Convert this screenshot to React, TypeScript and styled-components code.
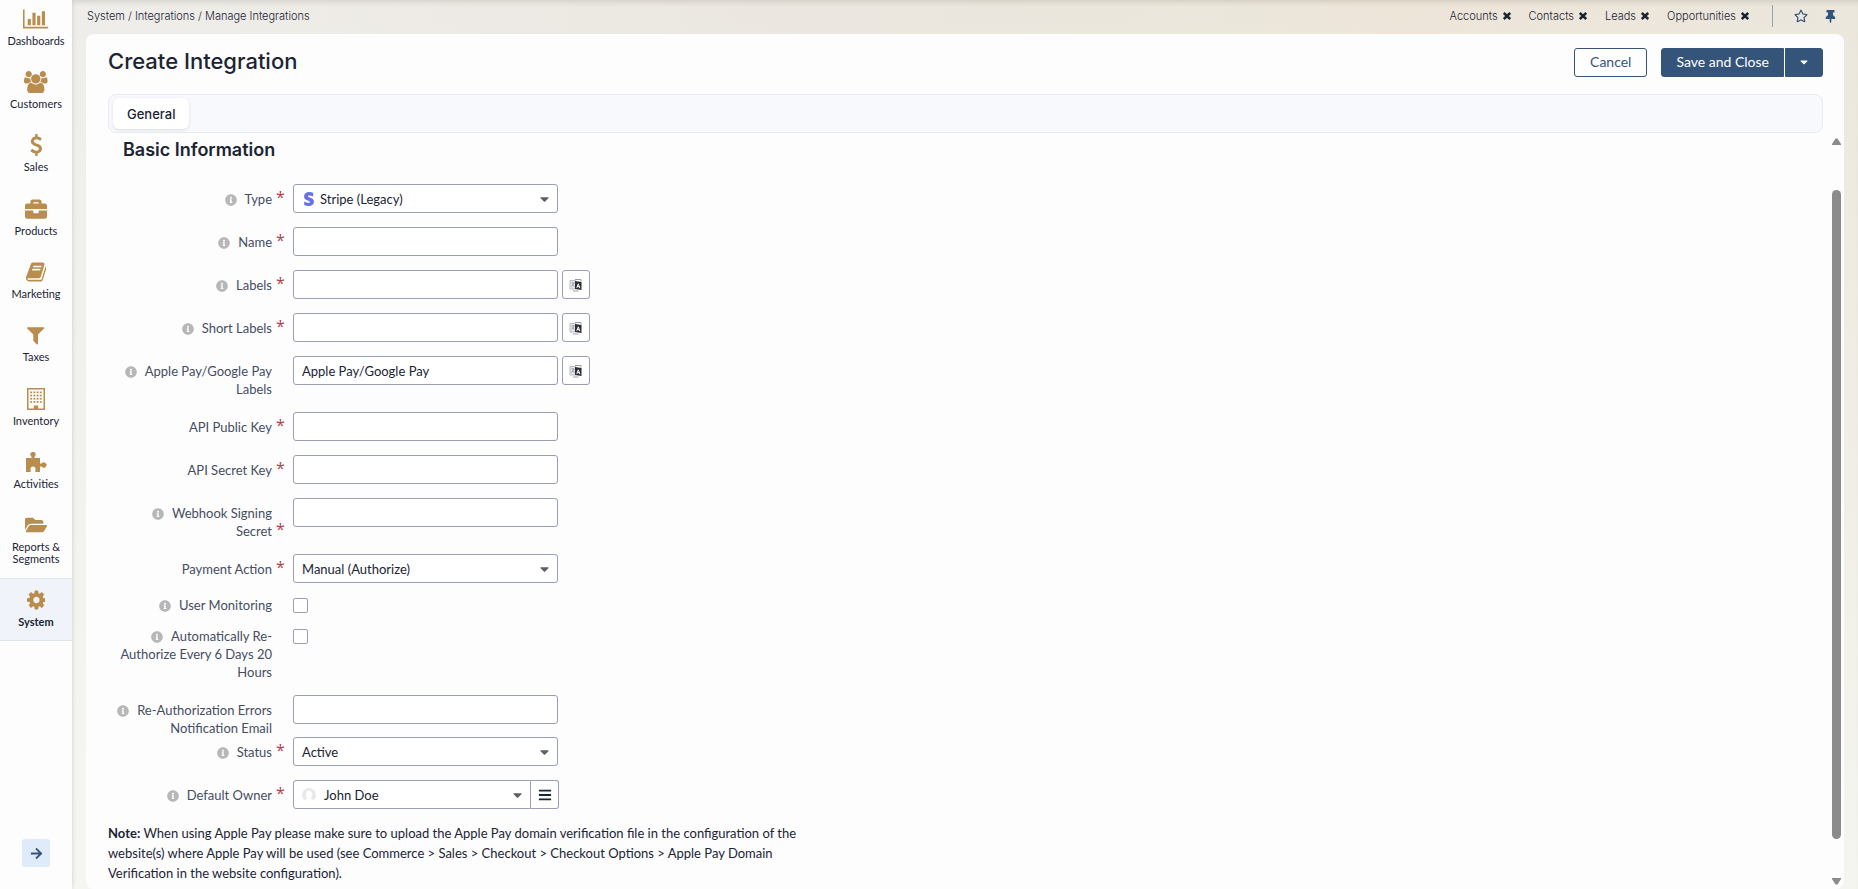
import React from "react";
import styled, { createGlobalStyle } from "styled-components";
import {
  FaArrowRight,
  FaBars,
  FaBriefcase,
  FaCaretDown,
  FaFolderOpen,
  FaInfoCircle,
  FaRegStar,
  FaStripeS,
  FaThumbtack,
} from "react-icons/fa";

const color = {
  text: "#1b2433",
  label: "#454d5e",
  gold: "#b98d4d",
  navy: "#34547a",
  line: "#9a9fb5",
  required: "#b1404a",
  surface: "#fdfdfe",
};

const bodyFont = `Lato, "Open Sans", sans-serif`;
const headFont = `Inter, Roboto, sans-serif`;

const GlobalStyle = createGlobalStyle`
  *, *::before, *::after { box-sizing: border-box; }
  body {
    margin: 0;
    font: 400 13px/18px ${bodyFont};
    color: ${color.text};
  }
  button, input, select { font: inherit; color: inherit; margin: 0; }
  a { color: inherit; text-decoration: none; }
  h1, h2, p, ul { margin: 0; padding: 0; }
`;

/* ---------- icons ---------- */

const Glyph = ({ w, d }: { w: number; d: string }) => (
  <svg viewBox={`0 0 ${w} 1792`} fill="currentColor" aria-hidden="true">
    <path d={d} />
  </svg>
);

const ChartIcon = () => (
  <Glyph
    w={2048}
    d="M640 896v512h-256v-512h256zM1024 384v1024h-256v-1024h256zM2048 1536v128h-2048v-1536h128v1408h1920zM1408 640v768h-256v-768h256zM1792 256v1152h-256v-1152h256z"
  />
);
const UsersIcon = () => (
  <Glyph
    w={1920}
    d="M593 896q-162 5-265 128h-134q-82 0-138-40.5t-56-118.5q0-353 124-353 6 0 43.5 21t97.5 42.5 119 21.5q67 0 133-23-5 37-5 66 0 139 81 256zM1664 1533q0 120-73 189.5t-194 69.5h-874q-121 0-194-69.5t-73-189.5q0-53 3.5-103.5t14-109 26.5-108.5 43-97.5 62-81 85.5-53.5 111.5-20q10 0 43 21.5t73 48 107 48 135 21.5 135-21.5 107-48 73-48 43-21.5q61 0 111.5 20t85.5 53.5 62 81 43 97.5 26.5 108.5 14 109 3.5 103.5zM640 256q0 106-75 181t-181 75-181-75-75-181 75-181 181-75 181 75 75 181zM1344 640q0 159-112.5 271.5t-271.5 112.5-271.5-112.5-112.5-271.5 112.5-271.5 271.5-112.5 271.5 112.5 112.5 271.5zM1920 865q0 78-56 118.5t-138 40.5h-134q-103-123-265-128 81-117 81-256 0-29-5-66 66 23 133 23 59 0 119-21.5t97.5-42.5 43.5-21q124 0 124 353zM1792 256q0 106-75 181t-181 75-181-75-75-181 75-181 181-75 181 75 75 181z"
  />
);
const DollarIcon = () => (
  <Glyph
    w={1024}
    d="M978 1185q0 153-99.5 263.5t-258.5 136.5v175q0 14-9 23t-23 9h-135q-13 0-22.5-9.5t-9.5-22.5v-175q-66-9-127.5-31t-101.5-44.5-74-48-46.5-37.5-17.5-18q-17-21-2-41l103-135q7-10 23-12 15-2 24 9l2 2q113 99 243 125 37 8 74 8 81 0 142.5-43t61.5-122q0-28-15-53t-33.5-42-58.5-37.5-66-32-80-32.5q-39-16-61.5-25t-61.5-26.5-62.5-31-56.5-35.5-53.5-42.5-43.5-49-35.5-58-21-66.5-8.5-78q0-138 98-242t255-134v-180q0-13 9.5-22.5t22.5-9.5h135q14 0 23 9t9 23v176q57 6 110.5 23t87 33.5 63.5 37.5 39 29 15 14q17 18 5 38l-81 146q-8 15-23 16-14 3-27-7-3-3-14.5-12t-39-26.5-58.5-32-74.5-26-85.5-11.5q-95 0-155 43t-60 111q0 26 8.5 48t29.5 41.5 39.5 33 56 31 60.5 27 70 27.5q53 20 81 31.5t76 35 75.5 42.5 62 50 53 63.5 31.5 76.5 13 94z"
  />
);
const BookIcon = () => (
  <Glyph
    w={1664}
    d="M1639 478q40 57 18 129l-275 906q-19 64-76.5 107.5t-122.5 43.5h-923q-77 0-148.5-53.5t-99.5-131.5q-24-67-2-127 0-4 3-27t4-37q1-8-3-21.5t-3-19.5q2-11 8-21t16.5-23.5 16.5-23.5q23-38 45-91.5t30-91.5q3-10 .5-30t-.5-28q3-11 17-28t17-23q21-36 42-92t25-90q1-9-2.5-32t.5-28q4-13 22-30.5t22-22.5q19-26 42.5-84.5t27.5-96.5q1-8-3-25.5t-2-26.5q2-8 9-18t18-23 17-21q8-12 16.5-30.5t15-35 16-36 19.5-32 26.5-23.5 36-11.5 47.5 5.5l-1 3q38-9 51-9h761q74 0 114 56t18 130l-274 906q-36 119-71.5 153.5t-128.5 34.5h-869q-27 0-38 15-11 16-1 43 24 70 144 70h923q29 0 56-15.5t35-41.5l300-987q7-22 5-57 38 15 59 43zM575 480q-4 13 2 22.5t20 9.5h608q13 0 25.5-9.5t16.5-22.5l21-64q4-13-2-22.5t-20-9.5h-608q-13 0-25.5 9.5t-16.5 22.5zM492 736q-4 13 2 22.5t20 9.5h608q13 0 25.5-9.5t16.5-22.5l21-64q4-13-2-22.5t-20-9.5h-608q-13 0-25.5 9.5t-16.5 22.5z"
  />
);
const FilterIcon = () => (
  <Glyph
    w={1408}
    d="M1403 295q17 41-14 70l-493 493v742q0 42-39 59-13 5-25 5-27 0-45-19l-256-256q-19-19-19-45v-486l-493-493q-31-29-14-70 17-39 59-39h1280q42 0 59 39z"
  />
);
const GearIcon = () => (
  <Glyph
    w={1536}
    d="M1024 896q0-106-75-181t-181-75-181 75-75 181 75 181 181 75 181-75 75-181zm512-109v222q0 12-8 23t-20 13l-185 28q-19 54-39 91 35 50 107 138 10 12 10 25t-9 23q-27 37-99 108t-94 71q-12 0-26-9l-138-108q-44 23-91 38-16 136-29 186-7 28-36 28h-222q-14 0-24.5-8.5t-11.5-21.5l-28-184q-49-16-90-37l-141 107q-10 9-25 9-14 0-25-11-126-114-165-168-7-10-7-23 0-12 8-23 15-21 51-66.5t54-70.5q-27-50-41-99l-183-27q-13-2-21-12.5t-8-23.5v-222q0-12 8-23t19-13l186-28q14-46 39-92-40-57-107-138-10-12-10-24 0-10 9-23 26-36 98.5-107.5t94.5-71.5q13 0 26 10l138 107q44-23 91-38 16-136 29-186 7-28 36-28h222q14 0 24.5 8.5t11.5 21.5l28 184q49 16 90 37l142-107q9-9 24-9 13 0 25 10 129 119 165 170 7 8 7 22 0 12-8 23-15 21-51 66.5t-54 70.5q26 50 41 98l183 28q13 2 21 12.5t8 23.5z"
  />
);
const BuildingIcon = () => (
  <svg viewBox="0 0 18 22" fill="currentColor" aria-hidden="true">
    <path fillRule="evenodd" d="M0 0h18v22H0zM1.5 1.5v19h5.300v-3h4.400v3h5.300v-19z" />
    {[3.5, 6.7, 9.9, 13.1].map((y) =>
      [3.2, 6.4, 9.6, 12.800].map((x) => (
        <rect key={`${x}-${y}`} x={x} y={y} width="1.900" height="1.700" />
      ))
    )}
  </svg>
);
const PuzzleIcon = () => (
  <svg viewBox="0 0 22 20" fill="currentColor" aria-hidden="true">
    <path d="M1 6h5.600V4.900a2.700 2.700 0 1 1 2.800 0V6H15v5.600h1.600a2.600 2.600 0 1 1 0 2.800H15V20h-4.700v-1.800a2.600 2.600 0 1 0-4.600 0V20H1z" />
  </svg>
);
const CloseIcon = () => (
  <svg viewBox="0 0 8 8" fill="none" stroke="currentColor" strokeWidth="2.400" aria-hidden="true">
    <path d="M.8 1 7.200 7M7.200 1 .8 7" />
  </svg>
);
const TranslateIcon = () => (
  <svg viewBox="0 0 14 14" fill="none" aria-hidden="true">
    <path d="M1 2.500h5.500v8.500H1z" fill="#e4e5e8" stroke="#b9bcc3" />
    <path d="M2.500 5h3M4 4v1M5 5.500 2.500 8.500M3 6.500l2.500 2" stroke="#8d9098" strokeWidth=".8" />
    <path d="M6 1.500h6v2M4 13h5.500" stroke="#9b9ea6" />
    <path d="M6 3l6.500 1v8L6 11z" fill="#2b2d33" />
    <path d="m7.800 9.800 1.500-4 1.600 4.400M8.300 8.600h2" stroke="#fff" />
  </svg>
);
const Avatar = () => (
  <svg viewBox="0 0 14 14" aria-hidden="true">
    <circle cx="7" cy="7" r="7" fill="#e9e9ec" />
    <ellipse cx="7" cy="6.500" rx="3.200" ry="3.800" fill="#fff" />
    <path d="M2.500 14c.5-3 2-4 4.500-4s4 1 4.500 4z" fill="#fff" />
  </svg>
);

/* ---------- shell ---------- */

const Page = styled.div`
  display: flex;
  min-height: 100vh;
  background: linear-gradient(180deg, rgba(247, 248, 244, 0) 0, rgba(247, 248, 244, 0.8) 100%),
    linear-gradient(90deg, #efeeea 0, #edeae5 25%, #ebe6df 45%, #ebe7db 65%, #eee5d9 75%, #ebe7dd 100%);
`;

const Sidebar = styled.nav`
  flex: 0 0 72px;
  display: flex;
  flex-direction: column;
  overflow: hidden;
  background: ${color.surface};
  box-shadow: 0 0 5px rgba(60, 50, 30, 0.15);
`;

const NavList = styled.ul`
  list-style: none;
  margin-top: -3px;
`;

const NavLink = styled.a<{ $active?: boolean }>`
  display: flex;
  flex-direction: column;
  align-items: center;
  gap: 5px;
  min-height: 63px;
  padding: 10px 4px 12px;
  border: solid ${({ $active }) => ($active ? "#e1e5ec" : "transparent")};
  border-width: 1px 0;
  background: ${({ $active }) => ($active ? "#f0f4fa" : "none")};
  font-size: 11px;
  font-weight: ${({ $active }) => ($active ? 700 : 400)};
  line-height: 12px;
  text-align: center;
  li:nth-child(3n) & { min-height: 64px; }
`;

const NavIcon = styled.span<{ $size: number }>`
  display: flex;
  align-items: center;
  justify-content: center;
  height: 22px;
  color: ${color.gold};
  svg { height: ${({ $size }) => $size}px; width: auto; }
`;

const ExpandButton = styled.button`
  display: flex;
  align-items: center;
  justify-content: center;
  width: 28px;
  height: 28px;
  margin: auto auto 22px;
  padding: 0;
  border: 0;
  border-radius: 3px;
  background: #dfebf8;
  color: ${color.navy};
`;

const Main = styled.main`
  flex: 1;
  min-width: 0;
  display: flex;
  flex-direction: column;
  padding: 0 14px;
  box-shadow: inset 0 5px 5px -3px rgba(70, 60, 40, 0.15);
`;

const TopBar = styled.header`
  display: flex;
  align-items: center;
  justify-content: space-between;
  height: 34px;
  padding: 0 7px 2px 1px;
  font: 300 11px/16px ${headFont};
`;

const Pinned = styled.div`
  display: flex;
  align-items: center;
  gap: 18px;
`;

const PinnedItem = styled.span`
  display: flex;
  align-items: center;
  gap: 5px;
`;

const BareButton = styled.button<{ $size: number }>`
  display: flex;
  padding: 0;
  border: 0;
  background: none;
  svg { width: ${({ $size }) => $size}px; height: ${({ $size }) => $size}px; }
`;

const Tools = styled.div`
  display: flex;
  align-items: center;
  gap: 16px;
  height: 22px;
  margin-left: 5px;
  padding-left: 21px;
  border-left: 1px solid #9aa0ae;
  color: ${color.navy};
`;

const Card = styled.section`
  flex: 1;
  display: flex;
  flex-direction: column;
  padding: 14px 0 0 22px;
  border-radius: 8px;
  background: ${color.surface};
`;

const TitleRow = styled.div`
  display: flex;
  align-items: flex-start;
  justify-content: space-between;
  margin-right: 21px;
`;

const Title = styled.h1`
  font: 500 22px/26px ${headFont};
`;

const Actions = styled.div`
  display: flex;
  gap: 14px;
`;

const Split = styled.div`
  display: flex;
  gap: 1px;
`;

const Button = styled.button<{ $primary?: boolean; $side?: "left" | "right" }>`
  display: flex;
  align-items: center;
  height: 29px;
  padding: 0 ${({ $side }) => ($side === "right" ? 12 : $side === "left" ? 14 : 15)}px 2px;
  border: 1px solid ${color.navy};
  border-radius: ${({ $side }) =>
    $side === "left" ? "3px 0 0 3px" : $side === "right" ? "0 3px 3px 0" : "3px"};
  background: ${({ $primary }) => ($primary ? color.navy : "#fff")};
  color: ${({ $primary }) => ($primary ? "#fff" : color.navy)};
  font-size: 14px;
`;

const TabBar = styled.div`
  display: flex;
  height: 39px;
  margin: 17px 21px 0 0;
  padding: 3px 4px;
  border: 1px solid #e9ebf2;
  border-radius: 8px;
  background: #f8f9fc;
`;

const Tab = styled.button`
  padding: 0 14px;
  border: 0;
  border-radius: 6px;
  background: #fff;
  box-shadow: 0 1px 3px rgba(30, 40, 70, 0.14);
  font: 500 13px/18px ${headFont};
`;

const Body = styled.div`
  flex: 1;
  display: flex;
`;

const Content = styled.div`
  flex: 1;
  min-width: 0;
`;

const ScrollTrack = styled.div`
  flex: 0 0 21px;
  display: flex;
  flex-direction: column;
  align-items: center;
  padding: 5px 3px 4px 9px;
  color: #8b8b8b;
  svg { width: 9px; height: 7px; }
`;

const ScrollThumb = styled.div`
  flex: 1;
  width: 9px;
  margin: 45px 0 39px;
  border-radius: 5px;
  background: #8b8b8b;
`;

/* ---------- form ---------- */

const SectionTitle = styled.h2`
  padding: 4px 0 22px 15px;
  font: 600 18px/25px ${headFont};
`;

const Row = styled.div<{ $tight?: boolean; $compact?: boolean }>`
  display: flex;
  align-items: flex-start;
  margin-top: ${({ $compact }) => ($compact ? -1 : 0)}px;
  margin-bottom: ${({ $tight }) => ($tight ? 0 : 14)}px;
`;

const LabelCell = styled.div<{ $compact?: boolean }>`
  flex: 0 0 185px;
  display: flex;
  align-items: flex-end;
  padding-top: ${({ $compact }) => ($compact ? 0 : 6)}px;
  padding-left: 7px;
  color: ${color.label};
`;

const LabelText = styled.label`
  flex: 0 0 157px;
  text-align: right;
  svg {
    width: 12px;
    height: 12px;
    margin-right: 8px;
    vertical-align: -2px;
    color: #b7b7b9;
  }
`;

const Required = styled.span`
  height: 18px;
  padding-left: 4px;
  font-family: "Open Sans", sans-serif;
  font-size: 16px;
  line-height: 14px;
  color: ${color.required};
`;

const Controls = styled.div`
  display: flex;
  gap: 4px;
`;

const TextInput = styled.input`
  width: 265px;
  height: 29px;
  padding: 0 8px;
  border: 1px solid ${color.line};
  border-radius: 3px;
  background: #fff;
`;

const SelectWrap = styled.div<{ $joined?: boolean }>`
  position: relative;
  width: ${({ $joined }) => ($joined ? 238 : 265)}px;
  height: 29px;
  > svg:last-child {
    position: absolute;
    right: 9px;
    top: 8px;
    width: 9px;
    height: 14px;
    color: #5d5f66;
    pointer-events: none;
  }
`;

const Select = styled.select<{ $inset: number; $joined?: boolean }>`
  appearance: none;
  width: 100%;
  height: 100%;
  padding: 0 24px 0 ${({ $inset }) => $inset}px;
  border: 1px solid ${color.line};
  border-radius: ${({ $joined }) => ($joined ? "3px 0 0 3px" : "3px")};
  background: #fff;
`;

const SelectIcon = styled.span<{ $size: number }>`
  position: absolute;
  left: 9px;
  top: 0;
  height: 100%;
  display: flex;
  align-items: center;
  color: #6772e5;
  pointer-events: none;
  svg { width: ${({ $size }) => $size}px; height: ${({ $size }) => $size}px; }
`;

const Joined = styled.div`
  display: flex;
`;

const SquareButton = styled.button<{ $joined?: boolean }>`
  display: flex;
  align-items: center;
  justify-content: center;
  width: 28px;
  height: 29px;
  padding: 0;
  border: 1px solid ${color.line};
  border-left-width: ${({ $joined }) => ($joined ? 0 : 1)}px;
  border-radius: ${({ $joined }) => ($joined ? "0 3px 3px 0" : "3px")};
  background: #fff;
  svg { width: 14px; height: 14px; }
`;

const Checkbox = styled.input`
  appearance: none;
  width: 15px;
  height: 15px;
  margin: 2px 0 0;
  border: 1px solid ${color.line};
  border-radius: 2px;
  background: #fff;
`;

const Note = styled.p`
  max-width: 715px;
  line-height: 20px;
`;

type Field = {
  id: string;
  label: string;
  kind: "text" | "select" | "check";
  info?: boolean;
  required?: boolean;
  value?: string;
  translate?: boolean;
  icon?: "stripe" | "avatar";
  tight?: boolean;
};

const fields: Field[] = [
  { id: "type", label: "Type", kind: "select", info: true, required: true, value: "Stripe (Legacy)", icon: "stripe" },
  { id: "name", label: "Name", kind: "text", info: true, required: true },
  { id: "labels", label: "Labels", kind: "text", info: true, required: true, translate: true },
  { id: "short", label: "Short Labels", kind: "text", info: true, required: true, translate: true },
  { id: "wallet", label: "Apple Pay/Google Pay Labels", kind: "text", info: true, value: "Apple Pay/Google Pay", translate: true },
  { id: "public", label: "API Public Key", kind: "text", required: true },
  { id: "secret", label: "API Secret Key", kind: "text", required: true },
  { id: "webhook", label: "Webhook Signing Secret", kind: "text", info: true, required: true },
  { id: "action", label: "Payment Action", kind: "select", required: true, value: "Manual (Authorize)" },
  { id: "monitor", label: "User Monitoring", kind: "check", info: true },
  { id: "reauth", label: "Automatically Re-Authorize Every 6 Days 20 Hours", kind: "check", info: true },
  { id: "email", label: "Re-Authorization Errors Notification Email", kind: "text", info: true, tight: true },
  { id: "status", label: "Status", kind: "select", info: true, required: true, value: "Active" },
  { id: "owner", label: "Default Owner", kind: "select", info: true, required: true, value: "John Doe", icon: "avatar" },
];

const Control = ({ field }: { field: Field }) => {
  const { id, kind, value, icon, translate } = field;
  if (kind === "check") return <Checkbox id={id} type="checkbox" />;
  if (kind === "text")
    return (
      <Controls>
        <TextInput id={id} type="text" defaultValue={value} />
        {translate && (
          <SquareButton type="button" aria-label="Translations">
            <TranslateIcon />
          </SquareButton>
        )}
      </Controls>
    );
  const joined = icon === "avatar";
  return (
    <Joined>
      <SelectWrap $joined={joined}>
        <Select id={id} $joined={joined} $inset={icon === "avatar" ? 30 : icon ? 26 : 8}>
          <option>{value}</option>
        </Select>
        {icon && (
          <SelectIcon $size={14}>{joined ? <Avatar /> : <FaStripeS />}</SelectIcon>
        )}
        <FaCaretDown />
      </SelectWrap>
      {joined && (
        <SquareButton type="button" $joined aria-label="Choose owner">
          <FaBars />
        </SquareButton>
      )}
    </Joined>
  );
};

const nav = [
  { label: "Dashboards", icon: <ChartIcon />, size: 22 },
  { label: "Customers", icon: <UsersIcon />, size: 22 },
  { label: "Sales", icon: <DollarIcon />, size: 22 },
  { label: "Products", icon: <FaBriefcase />, size: 22 },
  { label: "Marketing", icon: <BookIcon />, size: 22 },
  { label: "Taxes", icon: <FilterIcon />, size: 22 },
  { label: "Inventory", icon: <BuildingIcon />, size: 22 },
  { label: "Activities", icon: <PuzzleIcon />, size: 20 },
  { label: "Reports & Segments", icon: <FaFolderOpen />, size: 22 },
  { label: "System", icon: <GearIcon />, size: 22, active: true },
];

export default function App() {
  return (
    <Page>
      <GlobalStyle />
      <Sidebar aria-label="Main">
        <NavList>
          {nav.map((item) => (
            <li key={item.label}>
              <NavLink href="#" $active={item.active}>
                <NavIcon $size={item.size}>{item.icon}</NavIcon>
                {item.label}
              </NavLink>
            </li>
          ))}
        </NavList>
        <ExpandButton type="button" aria-label="Expand menu">
          <FaArrowRight />
        </ExpandButton>
      </Sidebar>
      <Main>
        <TopBar>
          <span>System / Integrations / Manage Integrations</span>
          <Pinned>
            {["Accounts", "Contacts", "Leads", "Opportunities"].map((name) => (
              <PinnedItem key={name}>
                <a href="#">{name}</a>
                <BareButton type="button" $size={8} aria-label={`Remove ${name}`}>
                  <CloseIcon />
                </BareButton>
              </PinnedItem>
            ))}
            <Tools>
              <BareButton type="button" $size={14} aria-label="Favorite">
                <FaRegStar color={color.navy} />
              </BareButton>
              <BareButton type="button" $size={13} aria-label="Pin page">
                <FaThumbtack color={color.navy} />
              </BareButton>
            </Tools>
          </Pinned>
        </TopBar>
        <Card>
          <TitleRow>
            <Title>Create Integration</Title>
            <Actions>
              <Button type="button">Cancel</Button>
              <Split>
                <Button type="button" $primary $side="left">
                  Save and Close
                </Button>
                <Button type="button" $primary $side="right" aria-label="More save options">
                  <FaCaretDown size={12} />
                </Button>
              </Split>
            </Actions>
          </TitleRow>
          <TabBar>
            <Tab type="button">General</Tab>
          </TabBar>
          <Body>
            <Content>
              <SectionTitle>Basic Information</SectionTitle>
              <form>
                {fields.map((field) => {
                  const compact = field.kind === "check";
                  return (
                    <Row key={field.id} $tight={field.tight} $compact={compact}>
                      <LabelCell $compact={compact}>
                        <LabelText htmlFor={field.id}>
                          {field.info && <FaInfoCircle />}
                          {field.label}
                        </LabelText>
                        {field.required && <Required>*</Required>}
                      </LabelCell>
                      <Control field={field} />
                    </Row>
                  );
                })}
              </form>
              <Note>
                <strong>Note:</strong> When using Apple Pay please make sure to upload the Apple Pay domain
                verification file in the configuration of the website(s) where Apple Pay will be used (see
                Commerce &gt; Sales &gt; Checkout &gt; Checkout Options &gt; Apple Pay Domain Verification in the
                website configuration).
              </Note>
            </Content>
            <ScrollTrack aria-hidden="true">
              <svg viewBox="0 0 9 7" fill="currentColor">
                <path d="M3.500.6h2L9 6v1H0V6z" />
              </svg>
              <ScrollThumb />
              <svg viewBox="0 0 9 7" fill="currentColor">
                <path d="M0 0h9v1L5.500 6.400h-2L0 1z" />
              </svg>
            </ScrollTrack>
          </Body>
        </Card>
      </Main>
    </Page>
  );
}
